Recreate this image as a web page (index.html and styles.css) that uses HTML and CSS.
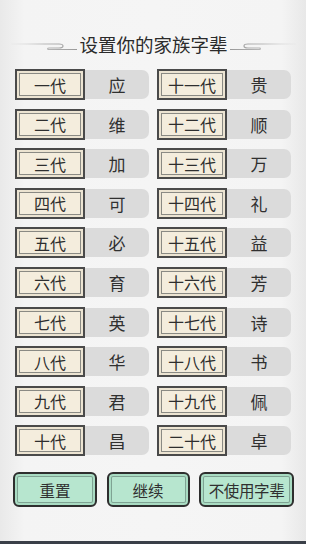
FILE: index.html
```html
<!DOCTYPE html>
<html lang="zh">
<head>
<meta charset="utf-8">
<link rel="stylesheet" href="styles.css">
</head>
<body>
<div class="page">
  <div class="title-row">
    <svg class="deco deco-left" width="66" height="10" viewBox="0 0 66 10">
      <defs>
        <linearGradient id="gl" x1="0" x2="1" y1="0" y2="0">
          <stop offset="0" stop-color="#d8d8d8" stop-opacity="0.2"/>
          <stop offset="0.5" stop-color="#b8b8b8"/>
          <stop offset="1" stop-color="#9a9a9a"/>
        </linearGradient>
      </defs>
      <path d="M0 3 H48 Q52 3 52 5 Q52 7 48 7 H38 Q36 7 37 8.5 H66" fill="none" stroke="url(#gl)" stroke-width="1.2"/>
    </svg>
    <h1 class="title">设置你的家族字辈</h1>
    <svg class="deco deco-right" width="66" height="10" viewBox="0 0 66 10">
      <defs>
        <linearGradient id="gr" x1="0" x2="1" y1="0" y2="0">
          <stop offset="0" stop-color="#9a9a9a"/>
          <stop offset="0.5" stop-color="#b8b8b8"/>
          <stop offset="1" stop-color="#d8d8d8" stop-opacity="0.2"/>
        </linearGradient>
      </defs>
      <path d="M0 8.5 H29 Q31 8.5 30 7 H18 Q14 7 14 5 Q14 3 18 3 H66" fill="none" stroke="url(#gr)" stroke-width="1.2"/>
    </svg>
  </div>

  <div class="grid">
    <div class="item"><div class="label">一代</div><div class="value">应</div></div>
    <div class="item"><div class="label">十一代</div><div class="value">贵</div></div>
    <div class="item"><div class="label">二代</div><div class="value">维</div></div>
    <div class="item"><div class="label">十二代</div><div class="value">顺</div></div>
    <div class="item"><div class="label">三代</div><div class="value">加</div></div>
    <div class="item"><div class="label">十三代</div><div class="value">万</div></div>
    <div class="item"><div class="label">四代</div><div class="value">可</div></div>
    <div class="item"><div class="label">十四代</div><div class="value">礼</div></div>
    <div class="item"><div class="label">五代</div><div class="value">必</div></div>
    <div class="item"><div class="label">十五代</div><div class="value">益</div></div>
    <div class="item"><div class="label">六代</div><div class="value">育</div></div>
    <div class="item"><div class="label">十六代</div><div class="value">芳</div></div>
    <div class="item"><div class="label">七代</div><div class="value">英</div></div>
    <div class="item"><div class="label">十七代</div><div class="value">诗</div></div>
    <div class="item"><div class="label">八代</div><div class="value">华</div></div>
    <div class="item"><div class="label">十八代</div><div class="value">书</div></div>
    <div class="item"><div class="label">九代</div><div class="value">君</div></div>
    <div class="item"><div class="label">十九代</div><div class="value">佩</div></div>
    <div class="item"><div class="label">十代</div><div class="value">昌</div></div>
    <div class="item"><div class="label">二十代</div><div class="value">卓</div></div>
  </div>

  <div class="buttons">
    <div class="btn btn-reset">重置</div>
    <div class="btn btn-next">继续</div>
    <div class="btn btn-skip">不使用字辈</div>
  </div>

  <div class="spacer"></div>
  <div class="bottom-bar"></div>
</div>
</body>
</html>
```
FILE: styles.css
```css
* { box-sizing: border-box; }
html, body { margin: 0; padding: 0; }
body {
  width: 306px;
  height: 544px;
  overflow: hidden;
  font-family: "Noto Sans CJK SC", "Noto Sans", sans-serif;
  color: #333;
}
.page {
  width: 306px;
  height: 544px;
  display: flex;
  flex-direction: column;
  background: linear-gradient(90deg, #e9e9e9 0%, #f4f4f4 8%, #f5f5f5 50%, #f4f4f4 92%, #e8e8e8 100%);
}
.title-row {
  margin-top: 29px;
  height: 30px;
  display: flex;
  align-items: center;
  justify-content: center;
  gap: 2px;
  padding-left: 1px;
}
.deco { flex: none; margin-top: 3px; }
.title {
  margin: 0;
  font-size: 18.5px;
  font-weight: 400;
  line-height: 30px;
  color: #2b2b2b;
}
.grid {
  margin-top: 10px;
  padding-left: 15px;
  display: grid;
  grid-template-columns: 134px 134px;
  column-gap: 8px;
  row-gap: 8.6px;
}
.item {
  display: flex;
  height: 31px;
}
.label {
  width: 70px;
  flex: none;
  display: flex;
  align-items: center;
  justify-content: center;
  background: #f4eddd;
  border: 2px solid #4a4a4a;
  box-shadow: inset 0 0 0 2px #ece4d2, inset 0 0 0 3px #8a8a84;
  font-size: 16px;
  color: #2e2e2e;
}
.value {
  flex: 1;
  margin: 1px 0;
  display: flex;
  align-items: center;
  justify-content: center;
  background: #dbdbdb;
  border-radius: 0 7px 7px 0;
  font-size: 17px;
  color: #303030;
}
.buttons {
  margin-top: 16px;
  padding-left: 13px;
  display: flex;
  gap: 9.5px;
}
.btn {
  height: 35px;
  display: flex;
  align-items: center;
  justify-content: center;
  background: #b7e6cf;
  border: 2px solid #2e2e2e;
  border-radius: 6px;
  box-shadow: inset 0 0 0 2px #a9dcc3, inset 0 0 0 3px #7fa393;
  font-size: 15.5px;
  color: #303030;
}
.btn-reset { width: 84px; }
.btn-next { width: 83px; }
.btn-skip { width: 95px; letter-spacing: -0.4px; }
.spacer { flex: 1; }
.bottom-bar {
  height: 3px;
  background: #3a3f48;
}
```
